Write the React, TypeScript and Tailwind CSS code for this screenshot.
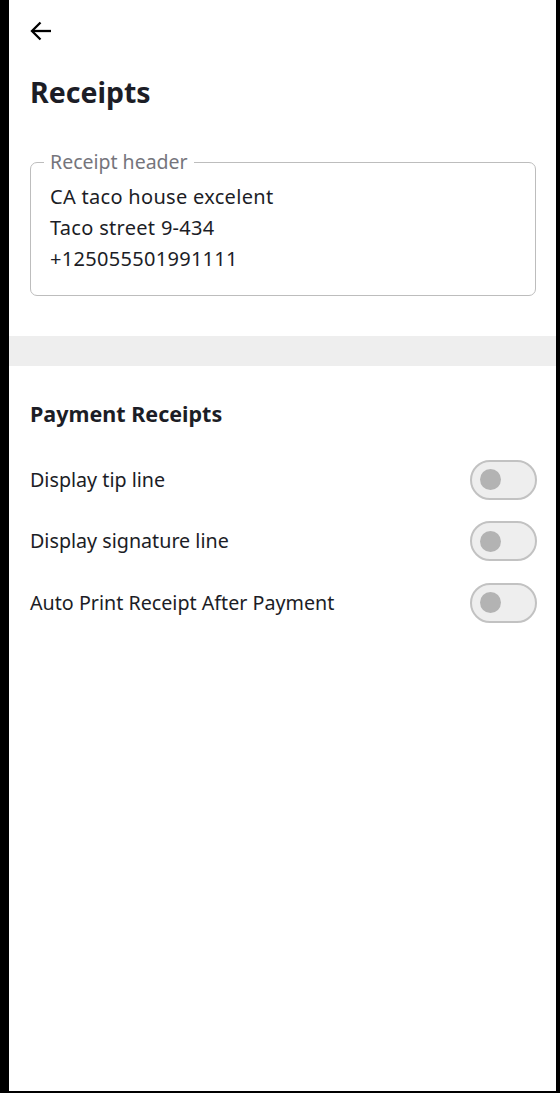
import { useState } from 'react'

const rows = ['Display tip line', 'Display signature line', 'Auto Print Receipt After Payment']

function Toggle({ on, onClick }: { on: boolean; onClick: () => void }) {
  return (
    <button
      onClick={onClick}
      className={`flex items-center w-[67px] h-[40px] rounded-full border-2 px-[8px] ${
        on ? 'bg-[#1c1d26] border-[#1c1d26] justify-end' : 'bg-[#eeeeee] border-[#c2c2c2] justify-start'
      }`}
    >
      <span className={`block w-[21px] h-[21px] rounded-full ${on ? 'bg-white' : 'bg-[#b3b3b3]'}`} />
    </button>
  )
}

export default function App() {
  const [toggles, setToggles] = useState([false, false, false])

  return (
    <div className="min-h-screen bg-black pb-[2px]" style={{ fontFamily: '"Noto Sans", "Open Sans", sans-serif' }}>
      <div className="ml-[9px] w-[547px] h-[1091px] bg-white text-[#1c1d26]">
        <div className="pl-[21px] pr-[20px] pt-[21px]">
          <svg width="22" height="20" viewBox="0 0 22 20" fill="none" stroke="currentColor" strokeWidth="2.3" className="text-black">
            <line x1="2" y1="10" x2="21" y2="10" />
            <polyline points="10.5,1.5 2,10 10.5,18.5" />
          </svg>
          <h1 className="mt-[33px] text-[28.5px] leading-[36px] font-bold">Receipts</h1>

          <div className="relative mt-[52px] border border-[#bdbdbd] rounded-[7px] pt-[18px] pb-[21px] px-[19px]">
            <span className="absolute -top-[13px] left-[13px] px-[6px] bg-white text-[#75757c] text-[19.5px] leading-[24px]">
              Receipt header
            </span>
            <div className="text-[20px] leading-[31px] tracking-[0.3px]">
              <div>CA taco house excelent</div>
              <div>Taco street 9-434</div>
              <div>+125055501991111</div>
            </div>
          </div>
        </div>

        <div className="mt-[40px] h-[30px] bg-[#eeeeee]" />

        <div className="pl-[21px] pr-[19px] pt-[34px]">
          <h2 className="text-[21.5px] leading-[28px] font-bold">Payment Receipts</h2>
          <div className="mt-[21px] flex flex-col">
            {rows.map((label, i) => (
              <div key={label} className="h-[61.5px] flex items-center justify-between">
                <span className="text-[19.7px] leading-[26px]">{label}</span>
                <Toggle
                  on={toggles[i]}
                  onClick={() => setToggles(toggles.map((t, j) => (j === i ? !t : t)))}
                />
              </div>
            ))}
          </div>
        </div>
      </div>
    </div>
  )
}
